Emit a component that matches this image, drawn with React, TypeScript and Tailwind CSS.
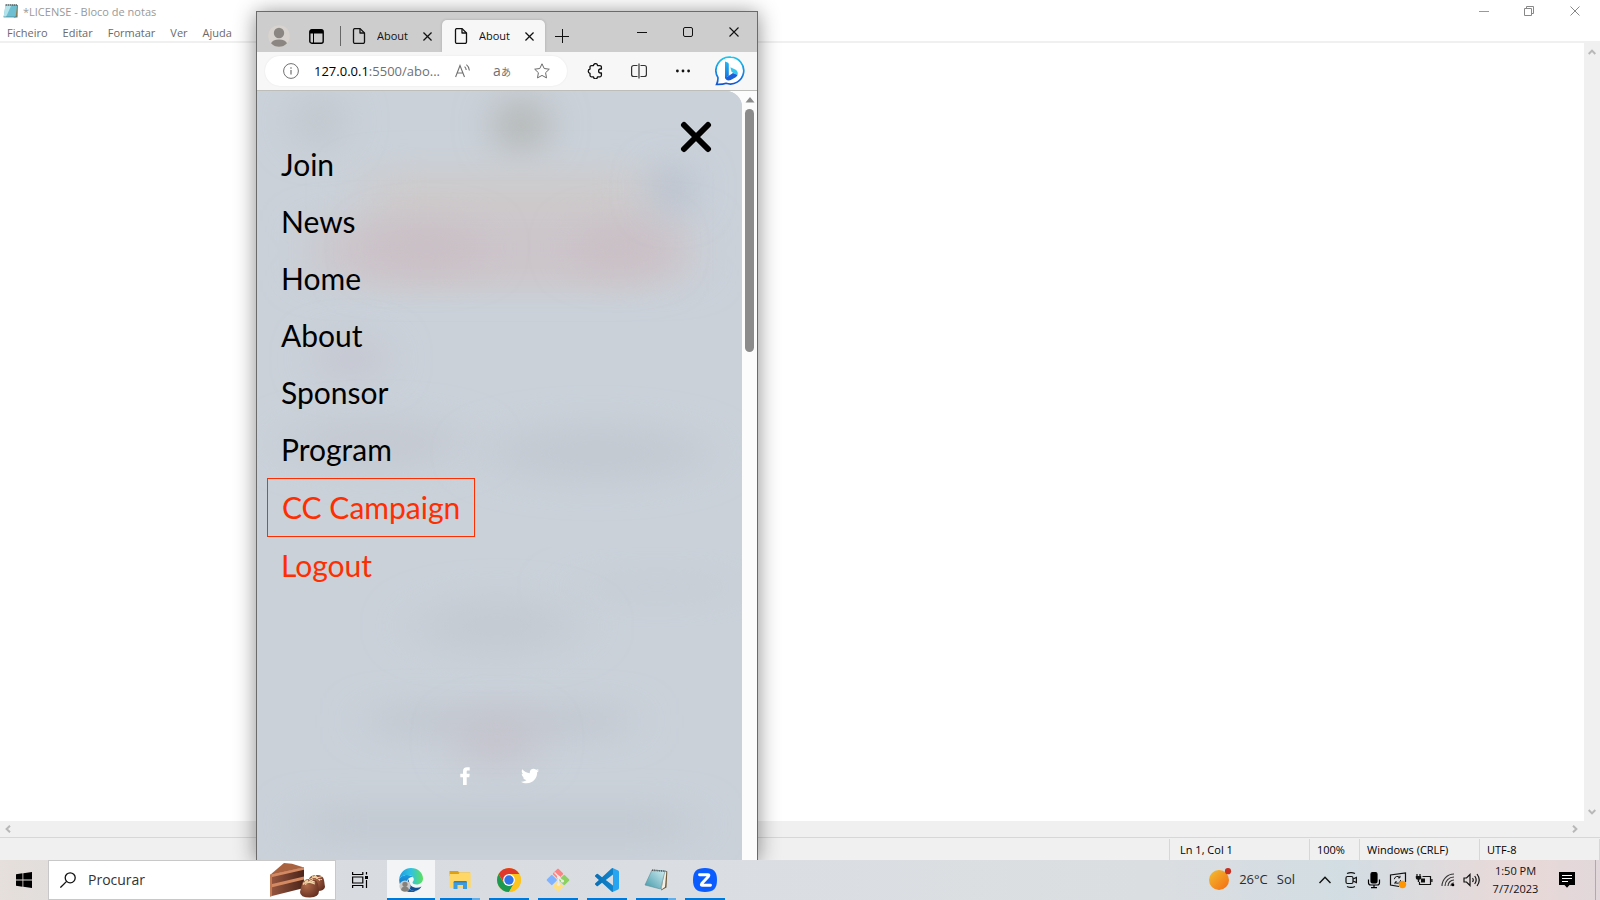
import React from "react";
import { FaTwitter } from "react-icons/fa";

const ui = "font-['Open_Sans','Noto_Sans',sans-serif]";

function NotepadIcon() {
  return (
    <svg viewBox="0 0 16 16" className="size-4" aria-hidden="true">
      <path d="M3 2h12l-.5 12.5H11z" fill="#8a7d50" />
      <path d="M2.6 1.8h11.6L12.6 14H.6z" fill="#6fbfd2" />
      <path d="M2.6 1.8h6L3 14H.6z" fill="#b4e3ec" />
      <path d="M3.2 1v2M5.2 1v2M7.2 1v2M9.2 1v2M11.2 1v2M13.2 1v2" stroke="#4a4a4a" strokeWidth=".9" />
      <path d="M.6 14H12l2.3-1" stroke="#3f7e8e" strokeWidth=".7" fill="none" />
    </svg>
  );
}

function DocIcon() {
  return (
    <svg viewBox="0 0 14 18" className="h-[18px] w-[14px] shrink-0" fill="none" stroke="#111" strokeWidth="1.3" strokeLinejoin="round" aria-hidden="true">
      <path d="M2.5 1.6h5.6l4.4 4.4v8.9a1.5 1.5 0 0 1-1.5 1.5H3a1.5 1.5 0 0 1-1.5-1.5V3a1.4 1.4 0 0 1 1-1.4z" />
      <path d="M8 1.8V6h4.3" />
    </svg>
  );
}

function Cross({ size, stroke, color }: { size: number; stroke: number; color: string }) {
  return (
    <svg width={size} height={size} viewBox="0 0 10 10" stroke={color} strokeWidth={stroke} className="shrink-0" aria-hidden="true">
      <path d="M.5.5l9 9M9.5.5l-9 9" />
    </svg>
  );
}

function Notepad() {
  return (
    <main className="flex min-h-0 flex-1 flex-col bg-white">
      <header className="flex h-[22px] shrink-0 items-center pr-px pl-[3px] text-[#999]">
        <NotepadIcon />
        <h1 className="ml-1 flex-1 pt-px text-[11px] leading-4">*LICENSE - Bloco de notas</h1>
        <div className="flex">
          <button aria-label="Minimizar" className="flex w-[45px] justify-center">
            <svg viewBox="0 0 10 10" className="size-[10px]" stroke="#999"><path d="M0 5.5h10" /></svg>
          </button>
          <button aria-label="Restaurar" className="flex w-[45px] justify-center">
            <svg viewBox="0 0 10 10" className="size-[10px]" fill="none" stroke="#888"><path d="M.5 2.5h7v7h-7zM2.5 2.500v-2h7v7h-2" /></svg>
          </button>
          <button aria-label="Fechar" className="flex w-[48px] justify-center">
            <Cross size={10} stroke={1} color="#888" />
          </button>
        </div>
      </header>
      <nav className="flex h-[19px] shrink-0 items-center gap-[15px] pt-[2px] pl-[7px] text-[11px] text-[#6a6a6a]">
        {["Ficheiro", "Editar", "Formatar", "Ver", "Ajuda"].map((m) => (
          <button key={m} className="leading-4">{m}</button>
        ))}
      </nav>
      <div className="flex min-h-0 flex-1 border-t-2 border-[#f0f0f0]">
        <textarea aria-label="Documento" className="min-w-0 flex-1 resize-none bg-white outline-none" />
        <div className="flex w-4 shrink-0 flex-col items-center justify-between bg-[#f0f0f0] py-[6px]">
          <svg viewBox="0 0 8 6" className="h-[6px] w-2" fill="none" stroke="#b8b8b8" strokeWidth="2"><path d="M.7 5L4 1.6 7.3 5" /></svg>
          <svg viewBox="0 0 8 6" className="h-[6px] w-2" fill="none" stroke="#b8b8b8" strokeWidth="2"><path d="M.7 1L4 4.4 7.3 1" /></svg>
        </div>
      </div>
      <div className="flex h-4 shrink-0 items-center justify-between bg-[#f0f0f0] pr-[22px] pl-[5px]">
        <svg viewBox="0 0 6 8" className="h-2 w-[6px]" fill="none" stroke="#b8b8b8" strokeWidth="2"><path d="M5 .7L1.6 4 5 7.3" /></svg>
        <svg viewBox="0 0 6 8" className="h-2 w-[6px]" fill="none" stroke="#b8b8b8" strokeWidth="2"><path d="M1 .7L4.4 4 1 7.3" /></svg>
      </div>
      <footer className="flex h-[23px] shrink-0 justify-end border-t border-[#d7d7d7] bg-[#f0f0f0] pt-px text-[11px] leading-[22px] text-black">
        <span className="w-[140px] border-l border-[#d7d7d7] pl-[10px]">Ln 1, Col 1</span>
        <span className="w-[50px] border-l border-[#d7d7d7] pl-[7px]">100%</span>
        <span className="w-[120px] border-l border-[#d7d7d7] pl-[7px]">Windows (CRLF)</span>
        <span className="w-[121px] border-x border-[#d7d7d7] pl-[7px]">UTF-8</span>
      </footer>
    </main>
  );
}

function Tab({ active }: { active?: boolean }) {
  return (
    <div
      role="tab"
      aria-selected={!!active}
      className={
        active
          ? "flex w-[103px] items-center rounded-t-[5px] bg-[#f7f7f7] pl-3 shadow-[0_0_3px_rgba(0,0,0,0.18)]"
          : "flex w-[101px] items-center pl-[11px]"
      }
    >
      <DocIcon />
      <span className="ml-[11px] w-[37px] overflow-hidden text-[11px] leading-4 text-[#111]">About</span>
      <button aria-label="Close tab" className="ml-2 flex size-[10px] items-center justify-center">
        <Cross size={9} stroke={1.4} color="#111" />
      </button>
    </div>
  );
}

function TabStrip() {
  return (
    <div className="flex h-10 shrink-0 bg-[#cdcdcd] pt-2">
      <button aria-label="Profile" className="ml-[11px] flex w-[22px] items-center">
        <svg viewBox="0 0 22 22" className="size-[22px]">
          <circle cx="11" cy="11" r="10.8" fill="#d8d3ce" />
          <circle cx="11" cy="8" r="5.2" fill="#8b8681" />
          <path d="M3 18.3a8.2 5 0 0 1 16 0 10.8 10.8 0 0 1-16 0z" fill="#8b8681" />
        </svg>
      </button>
      <button aria-label="Tab actions" className="ml-[19px] flex w-[15px] items-center">
        <svg viewBox="0 0 15 15" className="size-[15px]" fill="none" stroke="#000">
          <rect x=".8" y=".8" width="13.4" height="13.4" rx="2" strokeWidth="1.4" />
          <path d="M1 2.7h13" strokeWidth="3.6" />
          <path d="M4.500 4v10" strokeWidth="1" />
        </svg>
      </button>
      <span className="mt-[6px] ml-4 h-5 w-px bg-[#666]" />
      <div role="tablist" className="flex">
        <Tab />
        <Tab active />
      </div>
      <button aria-label="New tab" className="ml-[10px] flex w-[14px] items-center">
        <svg viewBox="0 0 14 14" className="size-[14px]" stroke="#111"><path d="M0 7.5h14M7.5 0v14" /></svg>
      </button>
      <div className="mb-2 flex flex-1 items-center justify-end pr-[18px]">
        <button aria-label="Minimize" className="w-[10px]"><svg viewBox="0 0 10 10" className="size-[10px]" stroke="#111"><path d="M0 5.5h10" /></svg></button>
        <button aria-label="Maximize" className="ml-9 w-[10px]"><svg viewBox="0 0 10 10" className="size-[10px]" fill="none" stroke="#111"><rect x=".5" y=".5" width="9" height="9" rx="1.5" /></svg></button>
        <button aria-label="Close" className="ml-9 w-[10px]"><Cross size={10} stroke={1.1} color="#111" /></button>
      </div>
    </div>
  );
}

function Toolbar() {
  return (
    <div className="flex h-[38px] shrink-0 items-center bg-[#f7f7f7] pl-2">
      <div className="flex h-[30px] w-[302px] items-center rounded-full bg-white pl-[18px] shadow-[0_0_2px_rgba(0,0,0,0.08)]">
        <svg viewBox="0 0 16 16" className="size-4 shrink-0" fill="none" stroke="#707070" aria-hidden="true">
          <circle cx="8" cy="8" r="7.4" /><path d="M8 7v4.5M8 4.2v1.5" strokeWidth="1.2" />
        </svg>
        <button aria-label="Address" className="ml-[15px] w-[128px] overflow-hidden text-left text-[13px] leading-5 whitespace-nowrap text-[#707070]">
          <span className="text-black">127.0.0.1</span>:5500/abo...
        </button>
        <button aria-label="Read aloud" className="ml-[13px] w-4">
          <svg viewBox="0 0 16 14" className="h-[14px] w-4" fill="none" stroke="#707070" strokeWidth="1.1">
            <path d="M.6 13L5 1.5 9.5 13M2.2 9h5.7M9.6 2.6c1 .9 1.5 2 1.6 3.4M11.4.6c1.900 1.500 2.900 3.500 3 5.800" />
          </svg>
        </button>
        <button aria-label="Translate" className="ml-[21px] w-[20px] text-[14px] leading-5 whitespace-nowrap text-[#707070]">
          a<span className="font-['Noto_Sans_CJK_JP',sans-serif] text-[10px]">あ</span>
        </button>
        <button aria-label="Favorite" className="ml-[22px] w-4">
          <svg viewBox="0 0 16 16" className="size-4" fill="none" stroke="#6a6a6a" strokeLinejoin="round">
            <path d="M8 .8l2.200 4.700 5.100.7-3.700 3.500.9 5.200L8 12.400l-4.500 2.500.9-5.200L.7 6.200l5.100-.7z" />
          </svg>
        </button>
      </div>
      <button aria-label="Extensions" className="ml-5 w-4">
        <svg viewBox="0 0 16 16" className="size-4" fill="none" stroke="#111" strokeWidth="1.3" strokeLinejoin="round">
          <path d="M4.500 2.600h2a2 2 0 0 1 4 0h2.400a1.500 1.500 0 0 1 1.500 1.500V6h-.8a2 2 0 0 0 0 4h.8v2.300a1.500 1.500 0 0 1-1.500 1.500h-2.400a2 2 0 0 1-4 0h-2A1.500 1.500 0 0 1 3 12.300v-2a2.200 2.200 0 0 1 0-4.300V4.100a1.500 1.500 0 0 1 1.500-1.500z" />
        </svg>
      </button>
      <button aria-label="Split screen" className="ml-7 w-4">
        <svg viewBox="0 0 16 16" className="size-4" fill="none" stroke="#333" strokeWidth="1.2">
          <path d="M6.500 2.500H2.600a2 2 0 0 0-2 2v7a2 2 0 0 0 2 2h3.900M9.500 2.500h3.900a2 2 0 0 1 2 2v7a2 2 0 0 1-2 2H9.500M8 .5v15" />
        </svg>
      </button>
      <button aria-label="Settings" className="ml-7 w-4">
        <svg viewBox="0 0 16 16" className="size-4" fill="#111"><circle cx="2.400" cy="8" r="1.400" /><circle cx="8" cy="8" r="1.400" /><circle cx="13.600" cy="8" r="1.400" /></svg>
      </button>
      <button aria-label="Bing" className="ml-6 w-[30px]">
        <svg viewBox="0 0 30 30" className="size-[30px]">
          <defs>
            <linearGradient id="bing" x1="0" y1="0" x2="0" y2="1"><stop stopColor="#1cc8ee" /><stop offset="1" stopColor="#1257d6" /></linearGradient>
            <linearGradient id="bingStem" x1="0" y1="0" x2="0" y2="1"><stop stopColor="#22b8f2" /><stop offset="1" stopColor="#1673e0" /></linearGradient>
          </defs>
          <path d="M15.800 1.200a13.400 13.400 0 1 1-4.700 26.100c-2.500 1-5.800 1.200-9.500 1.100 1.200-2.500 1.500-4.500 1.300-7A13.400 13.400 0 0 1 15.800 1.200z" fill="#fff" stroke="url(#bing)" strokeWidth="1.700" />
          <path d="M10 5.500l2.600.9c.7.300 1.200.9 1.200 1.700v11.600L10 22.800z" fill="url(#bingStem)" />
          <path d="M15.400 11.200l4.800 2.200c2.400 1.200 3.200 3.700 2.200 5.900L18 16.800l-1.500-1.100z" fill="#35c6ef" />
          <path d="M13.800 19.800l4.200-2.900 4.500 2.200c-.3.900-1 1.600-1.800 2.100l-4.900 2.800c-3 1.300-5.800-.3-5.800-3.200 1.300.9 2.600.2 3.800-1z" fill="#1a5fdc" />
        </svg>
      </button>
    </div>
  );
}

const links = ["Join", "News", "Home", "About", "Sponsor", "Program"];

function Backdrop() {
  return (
    <svg className="absolute inset-0 size-full" viewBox="0 0 485 769" preserveAspectRatio="none" aria-hidden="true">
      <defs>
        <filter id="soft" x="-200%" y="-300%" width="500%" height="700%"><feGaussianBlur stdDeviation="20" /></filter>
        <filter id="wide" x="-50%" y="-200%" width="200%" height="500%"><feGaussianBlur stdDeviation="26 17" /></filter>
      </defs>
      <rect width="485" height="769" fill="#cad1d9" />
      <ellipse cx="62" cy="30" rx="26" ry="20" fill="#bdc3c8" filter="url(#soft)" />
      <ellipse cx="264" cy="34" rx="26" ry="20" fill="#a9aaa4" filter="url(#soft)" />
      <rect x="110" y="80" width="285" height="110" fill="#cdcacb" filter="url(#wide)" />
      <rect x="60" y="130" width="370" height="60" fill="#ccc5ca" filter="url(#wide)" />
      <ellipse cx="170" cy="156" rx="60" ry="18" fill="#c9bdc4" filter="url(#soft)" />
      <ellipse cx="362" cy="156" rx="48" ry="18" fill="#c9bdc4" filter="url(#soft)" />
      <ellipse cx="416" cy="98" rx="20" ry="16" fill="#adb6c6" filter="url(#soft)" />
      <ellipse cx="94" cy="268" rx="40" ry="14" fill="#c2c1cc" filter="url(#soft)" />
      <ellipse cx="120" cy="352" rx="90" ry="24" fill="#c4c9d1" filter="url(#wide)" />
      <ellipse cx="340" cy="362" rx="110" ry="28" fill="#c3c9d1" filter="url(#wide)" />
      <ellipse cx="400" cy="496" rx="90" ry="8" fill="#c4cad2" filter="url(#wide)" />
      <ellipse cx="240" cy="535" rx="80" ry="28" fill="#c4cad2" filter="url(#wide)" />
      <rect x="120" y="618" width="245" height="24" fill="#c0c5cd" filter="url(#wide)" />
      <ellipse cx="240" cy="650" rx="44" ry="20" fill="#c4c1ca" filter="url(#soft)" />
      <rect x="50" y="718" width="380" height="30" fill="#c1c8d0" filter="url(#wide)" />
    </svg>
  );
}

function SiteMenu() {
  return (
    <div className="flex min-h-0 flex-1 bg-[#fcfcfc]">
      <aside className="relative flex min-w-0 flex-1 overflow-hidden rounded-tr-2xl bg-[#cad1d9]">
        <Backdrop />
        <div className="relative flex flex-1 flex-col">
          <nav className="flex flex-1 flex-col items-start pt-[45px] pl-[10px] font-['Lato',sans-serif] text-[30px] leading-[57px] text-black">
            {links.map((l) => (
              <a key={l} href="#" className="px-[14px]">{l}</a>
            ))}
            <a href="#" className="border border-[#ff2e00] px-[14px] text-[#ff2e00]">CC Campaign</a>
            <a href="#" className="px-[14px] text-[#ff2e00]">Logout</a>
          </nav>
          <div className="flex items-center justify-center gap-12 pr-[3px] pb-[75px] text-white">
            <a href="#" aria-label="Facebook" className="flex w-4 justify-center">
              <svg viewBox="0 0 10 18" className="h-[18px] w-[10px]" fill="currentColor">
                <path d="M3 18V10.200H.3V6.800H3V4.300C3 1.500 4.300.200 7 .200h2.700v3.400H8c-1 0-1.300.400-1.300 1.300v1.900h3l-.4 3.400H6.700V18z" />
              </svg>
            </a>
            <a href="#" aria-label="Twitter"><FaTwitter className="size-[18px]" /></a>
          </div>
        </div>
        <button aria-label="Close menu" className="absolute top-[30px] right-[30px]">
          <svg viewBox="0 0 32 32" className="size-8" stroke="#000" strokeWidth="6" strokeLinecap="round"><path d="M4 4l24 24M28 4L4 28" /></svg>
        </button>
      </aside>
      <div className="flex w-[15px] shrink-0 flex-col items-center pt-[6px]">
        <svg viewBox="0 0 10 6" className="h-[6px] w-[10px]" fill="#8b8b8b"><path d="M5 0l4.500 5.500h-9z" /></svg>
        <div className="mt-[6px] h-[243px] w-[9px] rounded-full bg-[#8b8b8b]" />
      </div>
    </div>
  );
}

function Browser() {
  return (
    <section className="absolute top-[11px] bottom-10 left-64 flex w-[502px] flex-col border border-b-0 border-[#6b6b6b] shadow-[0_2px_20px_rgba(0,0,0,0.45)]">
      <TabStrip />
      <Toolbar />
      <div className="h-px shrink-0 bg-[#bdbdb9]" />
      <SiteMenu />
    </section>
  );
}

function Cake() {
  return (
    <svg viewBox="0 0 56 36" className="h-9 w-14 shrink-0" aria-hidden="true">
      <defs>
        <linearGradient id="cake" x1="0" x2="1"><stop stopColor="#9a5840" /><stop offset="1" stopColor="#4b241a" /></linearGradient>
        <radialGradient id="choc" cx=".35" cy=".35" r=".8"><stop stopColor="#b06a4a" /><stop offset="1" stopColor="#5e2a1c" /></radialGradient>
      </defs>
      <path d="M1 13L15 1l8 .8L35 5.500z" fill="#a8623f" />
      <path d="M1 13l34-7.500V26L1 34.500z" fill="url(#cake)" />
      <path d="M1 12.800l34-7.600v2.600L1 15.600zM1 22.500l34-8v3L1 25.800z" fill="#d38a62" />
      <path d="M1 13l2-1v22l-2 .5z" fill="#c27a55" />
      <path d="M40 17q1-4 8-4 6 0 7 5l1 7q-1 4-7 4-8 0-9-4z" fill="url(#choc)" />
      <path d="M43 14.500l10 3M43 17.500l10-3M46 13.500l5 5M41 17.500l6-4" stroke="#eed1a4" strokeWidth="1.100" />
      <path d="M33 22q1-5 8-5t8 5l1 7q0 6-9 6.500Q31 35.500 31 30z" fill="url(#choc)" />
      <path d="M34 21l12-1M35 18.500l11 3.500M36 22.500l8-5M40 17.500l6 3M34 22.500l5-4.500" stroke="#f0d4a8" strokeWidth="1.200" />
    </svg>
  );
}

function EdgeLogo() {
  return (
    <svg viewBox="0 0 24 24" className="size-6" aria-hidden="true">
      <defs>
        <linearGradient id="edgeTop" x1="0" x2="1"><stop stopColor="#1f9ee0" /><stop offset=".5" stopColor="#31c3e0" /><stop offset="1" stopColor="#5be05a" /></linearGradient>
        <linearGradient id="edgeBody" x1="0" y1="0" x2="0" y2="1"><stop stopColor="#1b9be2" /><stop offset="1" stopColor="#0c59a4" /></linearGradient>
      </defs>
      <path d="M.2 11C1 4.500 6 0 12 0c7 0 12 5 12 10.500 0 3.800-3 6-6.300 6-2.500 0-4.200-1-4.200-2 0-.7 1.300-1.400 1.300-3.200C14.800 8.500 11.500 7 8.300 7 5 7 1.500 8.300.2 11z" fill="url(#edgeTop)" />
      <path d="M.2 12C.2 9.300 4 7 8.300 7c3 0 4.700 1 5.500 2-3-.4-5.800 2-5.800 5.500 0 5 4 9 9.300 8.600A12 12 0 0 1 .2 12z" fill="url(#edgeBody)" />
      <path d="M9.800 11C8.500 13 8 15 9 18c1.500 4 5.500 5.800 9 4.600 1.800-.8 3.500-2.400 4.500-4.100-2 1.100-4 1.500-6.200 1.200-4-.5-6.700-4-6.500-8.700z" fill="#124f94" />
      <circle cx="6" cy="18" r="5.600" fill="#c9c9c9" />
      <circle cx="6" cy="16.300" r="2.600" fill="#85807c" />
      <path d="M2 22c.5-3 2-3.500 4-3.500s3.500.5 4 3.500a5.600 5.600 0 0 1-8 0z" fill="#85807c" />
    </svg>
  );
}

function FolderLogo() {
  return (
    <svg viewBox="0 0 24 24" className="size-6" aria-hidden="true">
      <path d="M1.500 3h8.500l1 1.500h11V8h-20.500z" fill="#dca012" />
      <path d="M1.500 6h9l1.500-1.600h10.700V20H1.500z" fill="#ffd766" />
      <path d="M5.500 21v-6.500a1.500 1.500 0 0 1 1.500-1.500h10.500a1.500 1.500 0 0 1 1.500 1.500V21h-4v-4H9.500v4z" fill="#3c9bdc" />
      <path d="M5.500 14.500A1.500 1.500 0 0 1 7 13h10.500a1.500 1.500 0 0 1 1.500 1.500z" fill="#2d82c4" />
    </svg>
  );
}

function ChromeLogo() {
  return (
    <svg viewBox="0 0 24 24" className="size-6" aria-hidden="true">
      <circle cx="12" cy="12" r="12" fill="#fcc41f" />
      <path d="M1.610 6A12 12 0 0 1 22.390 6H12L7 15z" fill="#e0392b" />
      <path d="M1.610 6A12 12 0 0 0 12 24l5.200-9L12 17.500 6.800 15z" fill="#1e9a50" />
      <path d="M22.390 6A12 12 0 0 1 12 24l5.200-9A6 6 0 0 0 12 6z" fill="#fcc41f" />
      <circle cx="12" cy="12" r="5.900" fill="#fff" />
      <circle cx="12" cy="12" r="4.700" fill="#2f74e8" />
    </svg>
  );
}

function GitLogo() {
  return (
    <svg viewBox="0 0 24 24" className="size-6" aria-hidden="true">
      <g transform="rotate(45 12 12)">
        <rect x="3.700" y="3.700" width="7.800" height="7.800" rx="1" fill="#fa8484" />
        <rect x="12.500" y="3.700" width="7.800" height="7.800" rx="1" fill="#8cd060" />
        <rect x="3.700" y="12.500" width="7.800" height="7.800" rx="1" fill="#80b3ff" />
        <rect x="12.500" y="12.500" width="7.800" height="7.800" rx="1" fill="#ffe080" />
      </g>
      <path d="M8.500 4.500l4 4v8M12.500 9l4 4" stroke="#ecebe8" strokeWidth="1.400" fill="none" />
      <circle cx="12.500" cy="9" r="1.600" fill="#ecebe8" /><circle cx="16.500" cy="13" r="1.600" fill="#ecebe8" /><circle cx="12.500" cy="16.500" r="1.600" fill="#ecebe8" />
    </svg>
  );
}

function CodeLogo() {
  return (
    <svg viewBox="0 0 24 24" className="size-6" aria-hidden="true">
      <defs>
        <linearGradient id="code" x1="0" x2="1"><stop stopColor="#0a6fb5" /><stop offset=".73" stopColor="#0f84cc" /><stop offset=".75" stopColor="#27a5f0" /><stop offset="1" stopColor="#27a5f0" /></linearGradient>
      </defs>
      <path fill="url(#code)" d="M23.150 2.587L18.210.210a1.494 1.494 0 0 0-1.705.290l-9.460 8.630-4.120-3.128a.999.999 0 0 0-1.276.057L.327 7.261A1 1 0 0 0 .326 8.740L3.899 12 .326 15.260a1 1 0 0 0 .001 1.479L1.650 17.940a.999.999 0 0 0 1.276.057l4.120-3.128 9.460 8.630a1.492 1.492 0 0 0 1.704.290l4.942-2.377A1.500 1.500 0 0 0 24 20.060V3.939a1.500 1.500 0 0 0-.850-1.352zm-5.146 14.861L10.826 12l7.178-5.448v10.896z" />
    </svg>
  );
}

function NotesLogo() {
  return (
    <svg viewBox="0 0 24 24" className="size-6" aria-hidden="true">
      <defs><linearGradient id="notes" x1="1" y1="0" x2="0" y2="1"><stop stopColor="#d3eef2" /><stop offset="1" stopColor="#3f97a8" /></linearGradient></defs>
      <path d="M21 2.500l2.300 1-.8 16-5.500 3z" fill="#6d5a3a" />
      <path d="M20.500 3l1.800 1-1.300 15-3.500 2.500z" fill="#f3efe4" />
      <path d="M8 2l13 1-4.500 18L1 17z" fill="url(#notes)" stroke="#5c8d97" strokeWidth=".6" />
      <path d="M8 2.200l13 1" stroke="#555" strokeWidth="1.600" strokeDasharray="1 .8" />
    </svg>
  );
}

function ZoomLogo() {
  return (
    <svg viewBox="0 0 24 24" className="size-6" aria-hidden="true">
      <path d="M12 0c8.500 0 12 3.500 12 12s-3.500 12-12 12S0 20.500 0 12 3.500 0 12 0z" fill="#0b5cff" />
      <path d="M6.500 6.700h8.200q2 0 .7 1.800L8.800 15.500q-1.300 1.800.7 1.800h8" fill="none" stroke="#fff" strokeWidth="2.900" strokeLinejoin="round" strokeLinecap="round" />
    </svg>
  );
}

const apps = [
  { name: "Edge", icon: <EdgeLogo />, active: true },
  { name: "Explorador", icon: <FolderLogo />, stacked: true },
  { name: "Chrome", icon: <ChromeLogo /> },
  { name: "Git", icon: <GitLogo /> },
  { name: "Code", icon: <CodeLogo /> },
  { name: "Bloco de notas", icon: <NotesLogo />, stacked: true },
  { name: "Zoom", icon: <ZoomLogo /> },
];

function Tray() {
  return (
    <div className="flex items-center">
      <button className="flex items-center text-[13px] text-[#2b2b2b]">
        <svg viewBox="0 0 24 24" className="size-6" aria-hidden="true">
          <defs><linearGradient id="sun" x1="0" y1="0" x2="1" y2="1"><stop stopColor="#f0c032" /><stop offset="1" stopColor="#f56a10" /></linearGradient></defs>
          <circle cx="11" cy="12" r="10" fill="url(#sun)" /><circle cx="20" cy="3.200" r="3.100" fill="#c62f20" />
        </svg>
        <span className="ml-[7px]">26°C</span>
        <span className="ml-[9px]">Sol</span>
      </button>
      <div className="ml-6 flex items-center gap-2">
        <svg viewBox="0 0 12 8" className="h-2 w-3" fill="none" stroke="#111" strokeWidth="1.400"><path d="M.5 7L6 1.300 11.500 7" /></svg>
        <svg viewBox="0 0 16 16" className="ml-1 size-4" fill="none" stroke="#111" strokeWidth="1.200">
          <rect x="3" y="4.500" width="7" height="7" rx="1.500" /><path d="M10 7l3.400-1.500v5L10 9M4 1.500q4-1.800 8 0M4 14.500q4 1.800 8 0" />
        </svg>
        <svg viewBox="0 0 14 18" className="h-[18px] w-[14px]" fill="none" stroke="#000" strokeWidth="1.200">
          <rect x="4" y="1.500" width="6" height="10.500" rx="1.500" fill="#000" /><path d="M1.500 8.500v3.300q0 2.200 2.200 2.200h6.600q2.200 0 2.200-2.200V8.500M7 14v2.500M4 16.700h6" />
        </svg>
        <svg viewBox="0 0 18 18" className="size-[18px]" fill="none" stroke="#111" strokeWidth="1.200">
          <path d="M10 15.500L1.500 14V4l15-2v9" />
          <path d="M5.300 8.200A3.200 3.200 0 0 1 11 6.600V4.800M11 6.800H9M11.600 9.200A3.200 3.200 0 0 1 6 11.200v1.900M6 10.900h2" strokeWidth="1" />
          <circle cx="13.500" cy="13.500" r="3.700" fill="#ff9500" stroke="none" />
        </svg>
        <svg viewBox="0 0 18 14" className="h-[14px] w-[18px]" fill="none" stroke="#111" strokeWidth="1.200">
          <path d="M7.500 3.500h8v8H4.500V9M16.900 6v3" /><path d="M6 5.500h4v4H6z" fill="#111" stroke="none" />
          <path d="M2 1v2M5 1v2" /><path d="M.8 3h5.400v2q0 1.500-2 1.800V9H2.800V6.800Q.8 6.500.8 5z" fill="#111" stroke="none" />
        </svg>
        <svg viewBox="0 0 14 14" className="size-[14px]" fill="none" stroke="#333" strokeWidth="1.100">
          <path d="M1 13A12 12 0 0 1 13 1M4 13a9 9 0 0 1 9-9M7 13a6 6 0 0 1 6-6M10 13a3 3 0 0 1 3-3" /><circle cx="12" cy="12" r="1.300" fill="#000" stroke="none" />
        </svg>
        <svg viewBox="0 0 17 14" className="h-[14px] w-[17px]" fill="none" stroke="#111" strokeWidth="1.200">
          <path d="M1 5h2.500L7 1.500v11L3.500 9H1zM9.500 5q1.500 2 0 4M11.700 3q3 4 0 8M14 1q4.500 6 0 12" />
        </svg>
      </div>
      <time className="w-[71px] text-center text-[11px] leading-[18px] text-[#111]">
        1:50 PM
        <br />
        7/7/2023
      </time>
      <button aria-label="Notificações" className="ml-2">
        <svg viewBox="0 0 16 16" className="size-4"><path d="M0 0h16v13h-5.500L8 15.800 5.500 13H0z" fill="#000" /><path d="M3 3.500h10M3 6.500h10M3 9.500h6" stroke="#fff" /></svg>
      </button>
      <span className="mr-1 ml-5 h-10 w-px bg-[#b3a9ab]" />
    </div>
  );
}

function Taskbar() {
  return (
    <footer className="relative flex h-10 shrink-0 items-stretch bg-[linear-gradient(90deg,#e6dfdb_0,#e0dedd_4%,#d8dce1_22%,#dadee3_40%,#dbdee1_72%,#d2dde3_84%,#ead9d8_95%,#e1d7da_100%)]">
      <button aria-label="Iniciar" className="flex w-12 items-center justify-center">
        <svg viewBox="0 0 16 16" className="size-4" fill="#000"><path d="M0 2.200L6.500 1.300v6.300H0zM7.300 1.200L16 0v7.600H7.300zM0 8.400h6.500v6.300L0 13.800zM7.300 8.400H16V16l-8.700-1.200z" /></svg>
      </button>
      <div className="flex w-[288px] items-center border border-[#c8c8c8] bg-white pl-[11px]">
        <svg viewBox="0 0 16 16" className="size-4 shrink-0" fill="none" stroke="#111" strokeWidth="1.300" aria-hidden="true"><circle cx="10.200" cy="5.800" r="5" /><path d="M6.600 9.400L.4 15.600" /></svg>
        <input type="search" aria-label="Procurar" placeholder="Procurar" className="ml-3 min-w-0 flex-1 bg-transparent text-[14px] leading-5 outline-none placeholder:text-[#333]" />
        <div className="mr-[10px]"><Cake /></div>
      </div>
      <button aria-label="Vista de tarefas" className="flex w-[51px] items-center justify-center pr-[3px]">
        <svg viewBox="0 0 16 16" className="size-4" fill="none" stroke="#000" strokeWidth="1.200">
          <path d="M.6 0v2.500h10.200V0M.6 16v-2.500h10.200V16M.6 5h10.200v6H.6zM14.500 0v2.500M14.500 8v8" /><path d="M13 4h3v3h-3z" fill="#000" stroke="none" />
        </svg>
      </button>
      <div className="flex flex-1 gap-px">
        {apps.map((a) => (
          <button key={a.name} aria-label={a.name} className={a.active ? "flex w-12 flex-col bg-[#f2f4f6]" : "flex w-12 flex-col px-1"}>
            <span className="flex flex-1 items-center justify-center self-center pt-[2px]">{a.icon}</span>
            <span className="flex h-[2px] w-full bg-[#0078d7]">{a.stacked && <span className="ml-auto w-2 bg-[#62ade8]" />}</span>
          </button>
        ))}
      </div>
      <Tray />
    </footer>
  );
}

export default function App() {
  return (
    <div className={`relative flex h-screen flex-col overflow-hidden ${ui}`}>
      <Notepad />
      <Browser />
      <Taskbar />
    </div>
  );
}
